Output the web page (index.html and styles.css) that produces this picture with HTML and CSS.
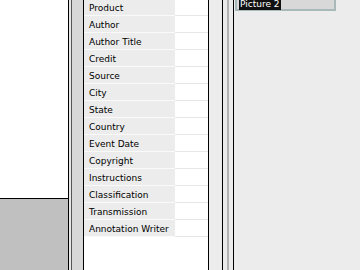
FILE: index.html
```html
<!DOCTYPE html>
<html lang="en">
<head>
    <meta charset="UTF-8">
    <meta name="viewport" content="width=device-width, initial-scale=1.0">
    <title>Picture Info</title>
    <link rel="stylesheet" href="styles.css">
</head>
<body>
    <div class="screen">
        <!-- Preview pane -->
        <div class="left-pane">
            <div class="preview"></div>
            <div class="well"></div>
        </div>

        <div class="splitter"></div>

        <!-- Caption fields -->
        <div class="fields">
            <div class="row"><span class="label">Product</span><span class="value"></span></div>
            <div class="row"><span class="label">Author</span><span class="value"></span></div>
            <div class="row"><span class="label">Author Title</span><span class="value"></span></div>
            <div class="row"><span class="label">Credit</span><span class="value"></span></div>
            <div class="row"><span class="label">Source</span><span class="value"></span></div>
            <div class="row"><span class="label">City</span><span class="value"></span></div>
            <div class="row"><span class="label">State</span><span class="value"></span></div>
            <div class="row"><span class="label">Country</span><span class="value"></span></div>
            <div class="row"><span class="label">Event Date</span><span class="value"></span></div>
            <div class="row"><span class="label">Copyright</span><span class="value"></span></div>
            <div class="row"><span class="label">Instructions</span><span class="value"></span></div>
            <div class="row"><span class="label">Classification</span><span class="value"></span></div>
            <div class="row"><span class="label">Transmission</span><span class="value"></span></div>
            <div class="row"><span class="label">Annotation Writer</span><span class="value"></span></div>
        </div>

        <div class="scrollbar"></div>
        <div class="divider"></div>

        <!-- Picture list -->
        <div class="right-pane">
            <div class="thumb">
                <span class="thumb-name">Picture 2</span>
            </div>
        </div>
    </div>
</body>
</html>
```

FILE: styles.css
```css
body {
    margin: 0;
    padding: 0;
    font-family: "DejaVu Sans", Verdana, sans-serif;
    font-size: 9px;
    color: #000;
    background-color: #ececec;
}
.screen {
    display: flex;
    width: 360px;
    height: 270px;
    overflow: hidden;
}
.left-pane {
    width: 68px;
    display: flex;
    flex-direction: column;
}
.preview {
    height: 198px;
    background-color: #fff;
}
.well {
    flex: 1;
    border-top: 1px solid #000;
    background-color: #c0c0c0;
}
.splitter {
    width: 14px;
    border-left: 1px solid #000;
    border-right: 1px solid #000;
    background: linear-gradient(to right, #e8e8e8 0 2px, #555 2px 3px, #d8d8d8 3px);
}
.fields {
    width: 124px;
    background-color: #fff;
    margin-top: -1px;
}
.row {
    display: flex;
    height: 17px;
}
.label {
    width: 91px;
    box-sizing: border-box;
    padding: 3px 0 0 5px;
    line-height: 13px;
    background-color: #ececec;
    border-bottom: 1px solid #fafafa;
}
.value {
    flex: 1;
    background-color: #fff;
    border-bottom: 1px solid #e6e6e6;
}
.scrollbar {
    width: 13px;
    border-left: 1px solid #000;
    border-right: 1px solid #000;
    background-color: #ececec;
}
.divider {
    width: 10px;
    border-right: 1px solid #000;
    background: linear-gradient(to right, #ececec 0 4px, #b4b4b4 4px 6px, #ececec 6px);
}
.right-pane {
    flex: 1;
    padding-left: 1px;
    background-color: #ececec;
}
.thumb {
    width: 95px;
    height: 10px;
    margin-top: -1px;
    padding-left: 2px;
    border: 2px solid #a9b8b8;
    border-top: none;
    background-color: #d8d8d8;
}
.thumb-name {
    display: inline-block;
    padding: 0 1px;
    height: 10px;
    line-height: 9px;
    color: #fff;
    background-color: #111;
}
```
